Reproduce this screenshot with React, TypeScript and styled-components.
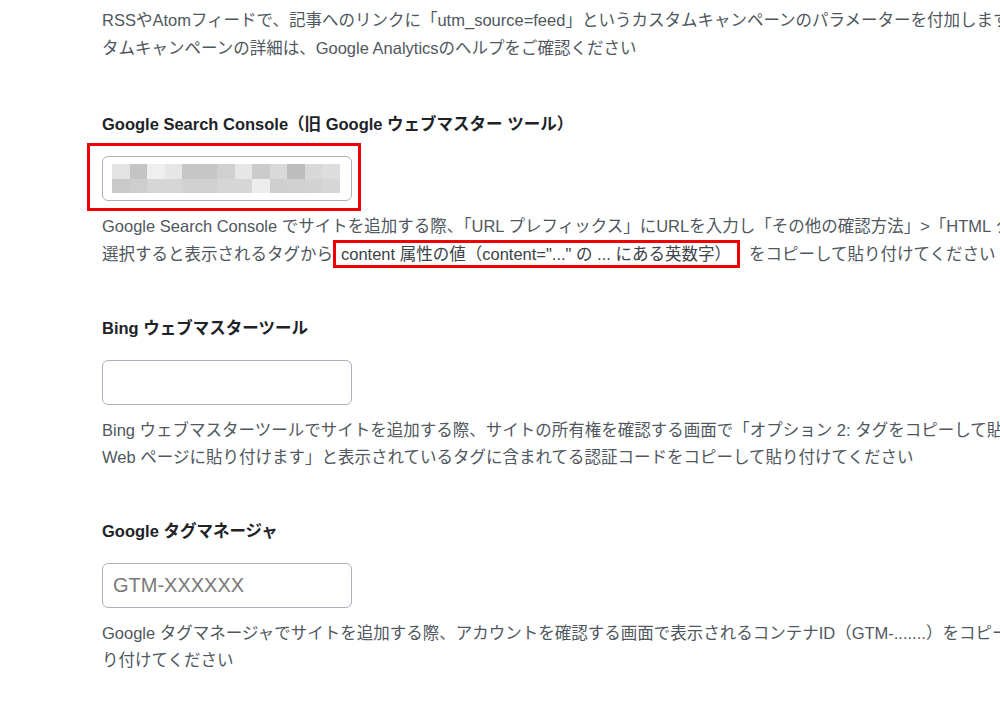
import React from "react";
import styled, { createGlobalStyle } from "styled-components";

const GlobalStyle = createGlobalStyle`
  html, body {
    margin: 0;
    padding: 0;
    background: #ffffff;
    overflow: hidden;
  }
  body {
    font-family: "Liberation Sans", "Noto Sans CJK JP", sans-serif;
  }
`;

const Page = styled.main`
  width: 1000px;
  height: 702px;
  overflow: hidden;
  padding: 6px 0 0 102px;
  box-sizing: border-box;
`;

const Section = styled.section<{ $gap?: number }>`
  display: flex;
  flex-direction: column;
  align-items: flex-start;
  margin-top: ${(p) => p.$gap ?? 46}px;
`;

const Label = styled.label`
  font-size: 16.5px;
  font-weight: bold;
  line-height: 28px;
  color: #1d2327;
  white-space: nowrap;
`;

const Description = styled.p<{ $tight?: boolean }>`
  margin: ${(p) => (p.$tight ? "0" : "12px 0 0")};
  font-size: 16.5px;
  line-height: ${(p) => (p.$tight ? "28px" : "27px")};
  color: #50575e;
  white-space: nowrap;
`;

const FieldWrap = styled.div`
  position: relative;
  margin-top: 18px;

  &[data-marked="true"]::after {
    content: "";
    position: absolute;
    top: -13px;
    left: -15px;
    right: -9px;
    bottom: -10px;
    border: 3px solid #f00000;
    pointer-events: none;
  }
`;

const Input = styled.input`
  display: block;
  width: 250px;
  height: 45px;
  box-sizing: border-box;
  padding: 0 10px;
  border: 1px solid #aab2bd;
  border-radius: 6px;
  background: #ffffff;
  font-family: "Liberation Sans", sans-serif;
  font-size: 20px;
  color: #2c3338;

  &::placeholder {
    color: #7a7a7a;
  }
`;

const Mosaic = styled.div`
  position: absolute;
  left: 10px;
  top: 8px;
  display: grid;
  grid-template-columns: repeat(13, 17.5px);
  grid-auto-rows: 14.5px;
  pointer-events: none;
`;

const Tile = styled.span<{ $shade: string }>`
  background: ${(p) => p.$shade};
`;

const Marked = styled.span`
  display: inline-block;
  line-height: 22px;
  padding: 0 6px 0 5px;
  margin: 0 9px 0 0;
  border: 3px solid #f00000;
  color: #3c434a;
`;

const shades = [
  "#e3e3e3", "#c4c4c4", "#efefef", "#e6e6e6", "#c6c6c6", "#c6c6c6", "#d0d0d0",
  "#e6e6e6", "#cbcbcb", "#d9d9d9", "#bdbdbd", "#d8d8d8", "#dddddd",
  "#c9c9c9", "#cecece", "#d6d6d6", "#d6d6d6", "#d1d1d1", "#d1d1d1", "#d6d6d6",
  "#d6d6d6", "#ededed", "#cfcfcf", "#d0d0d0", "#d3d3d3", "#d6d6d6",
];

export default function App() {
  return (
    <>
      <GlobalStyle />
      <Page>
        <Section $gap={0}>
          <Description $tight>
            RSSやAtomフィードで、記事へのリンクに「utm_source=feed」というカスタムキャンペーンのパラメーターを付加します。カス
            <br />
            タムキャンペーンの詳細は、Google Analyticsのヘルプをご確認ください
          </Description>
        </Section>

        <Section $gap={48}>
          <Label>Google Search Console（旧 Google ウェブマスター ツール）</Label>
          <FieldWrap data-marked="true">
            <Input type="text" aria-label="Google Search Console" />
            <Mosaic>
              {shades.map((s, i) => (
                <Tile key={i} $shade={s} />
              ))}
            </Mosaic>
          </FieldWrap>
          <Description>
            Google Search Console でサイトを追加する際、「URL プレフィックス」にURLを入力し「その他の確認方法」&gt;「HTML タグ」を
            <br />
            選択すると表示されるタグから
            <Marked>content 属性の値（content="..." の ... にある英数字）</Marked>
            をコピーして貼り付けてください
          </Description>
        </Section>

        <Section>
          <Label>Bing ウェブマスターツール</Label>
          <FieldWrap>
            <Input type="text" aria-label="Bing ウェブマスターツール" />
          </FieldWrap>
          <Description>
            Bing ウェブマスターツールでサイトを追加する際、サイトの所有権を確認する画面で「オプション 2: タグをコピーして貼り付け、既存の
            <br />
            Web ページに貼り付けます」と表示されているタグに含まれてる認証コードをコピーして貼り付けてください
          </Description>
        </Section>

        <Section>
          <Label>Google タグマネージャ</Label>
          <FieldWrap>
            <Input type="text" placeholder="GTM-XXXXXX" aria-label="Google タグマネージャ" />
          </FieldWrap>
          <Description>
            Google タグマネージャでサイトを追加する際、アカウントを確認する画面で表示されるコンテナID（GTM-.......）をコピーして貼
            <br />
            り付けてください
          </Description>
        </Section>
      </Page>
    </>
  );
}
